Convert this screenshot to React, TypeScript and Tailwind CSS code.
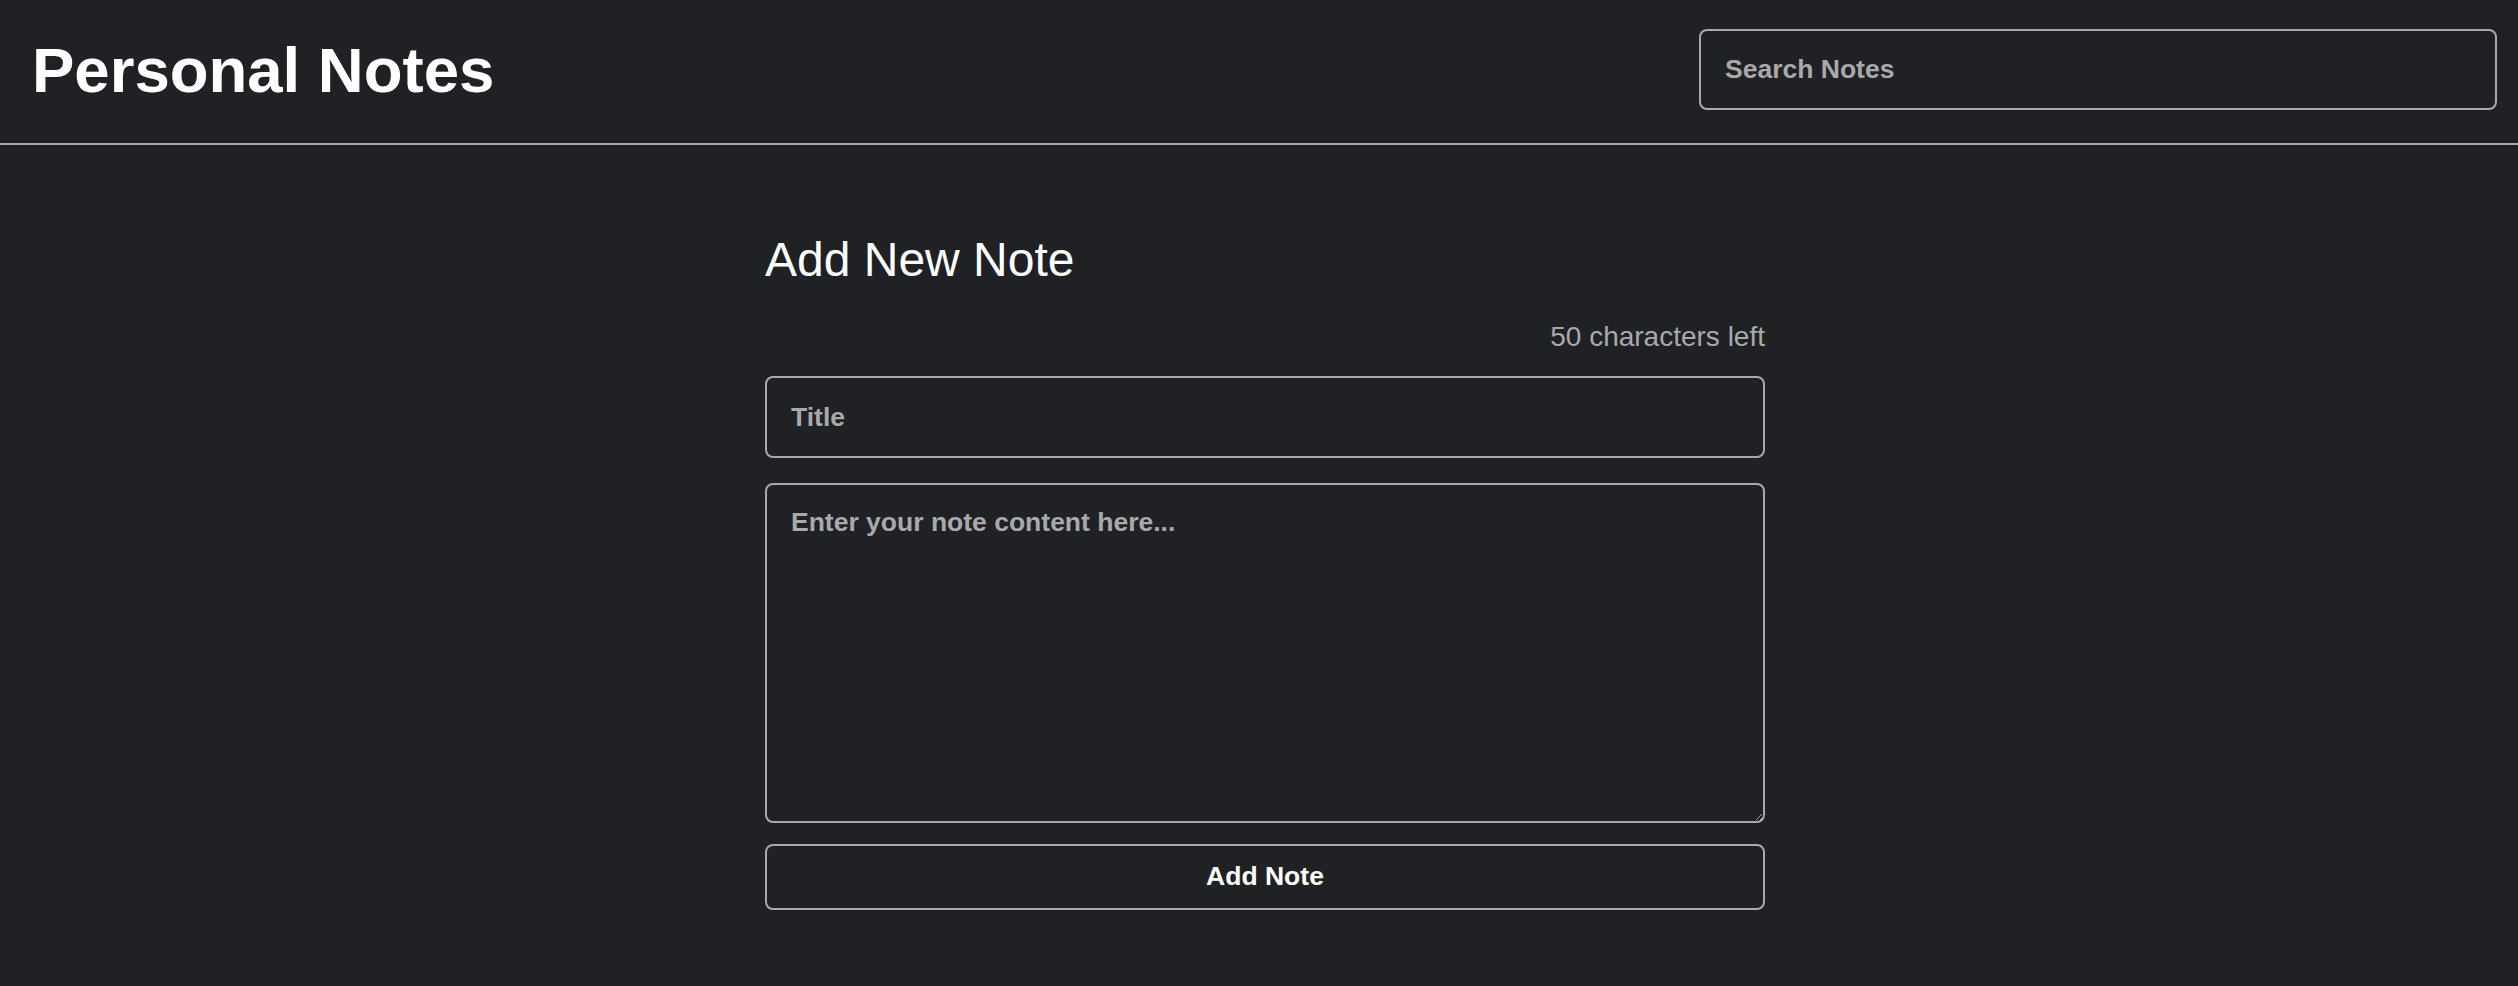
import React from "react";

export default function App() {
  return (
    <div className="min-h-[986px] w-full bg-[#202125] text-white" style={{ fontFamily: '"Liberation Sans", Arial, sans-serif' }}>
      <header className="flex h-[145px] items-center justify-between border-b-[2px] border-[#a9a9a9] pl-[32px] pr-[21px]">
        <h1 className="mb-[2px] text-[63.5px] font-bold leading-[73px] text-white">Personal Notes</h1>
        <input
          type="text"
          placeholder="Search Notes"
          className="mb-[4px] h-[81px] w-[798px] rounded-[8px] border-[2px] border-[#a9a9a9] bg-transparent px-[24px] text-[26.5px] font-bold text-white outline-none placeholder:text-[#a9a9a9]"
        />
      </header>
      <main className="flex justify-center pl-[12px]">
        <div className="flex w-[1000px] flex-col pt-[87px]">
          <h2 className="text-[48px] font-normal leading-[55px] text-white">Add New Note</h2>
          <div className="mt-[34px] text-right text-[28px] leading-[32px] text-[#a9a9a9]">50 characters left</div>
          <input
            type="text"
            placeholder="Title"
            className="mt-[23px] h-[82px] w-full rounded-[8px] border-[2px] border-[#a9a9a9] bg-transparent px-[24px] text-[26.5px] font-bold text-white outline-none placeholder:text-[#a9a9a9]"
          />
          <textarea
            placeholder="Enter your note content here..."
            className="mt-[25px] h-[340px] w-full rounded-[8px] border-[2px] border-[#a9a9a9] bg-transparent px-[24px] pb-[20px] pt-[22px] text-[26.5px] font-bold leading-[30px] text-white outline-none placeholder:text-[#a9a9a9]"
          />
          <button className="mt-[21px] h-[66px] w-full rounded-[8px] border-[2px] border-[#a9a9a9] bg-transparent text-[26.5px] font-bold text-white">
            Add Note
          </button>
        </div>
      </main>
    </div>
  );
}
